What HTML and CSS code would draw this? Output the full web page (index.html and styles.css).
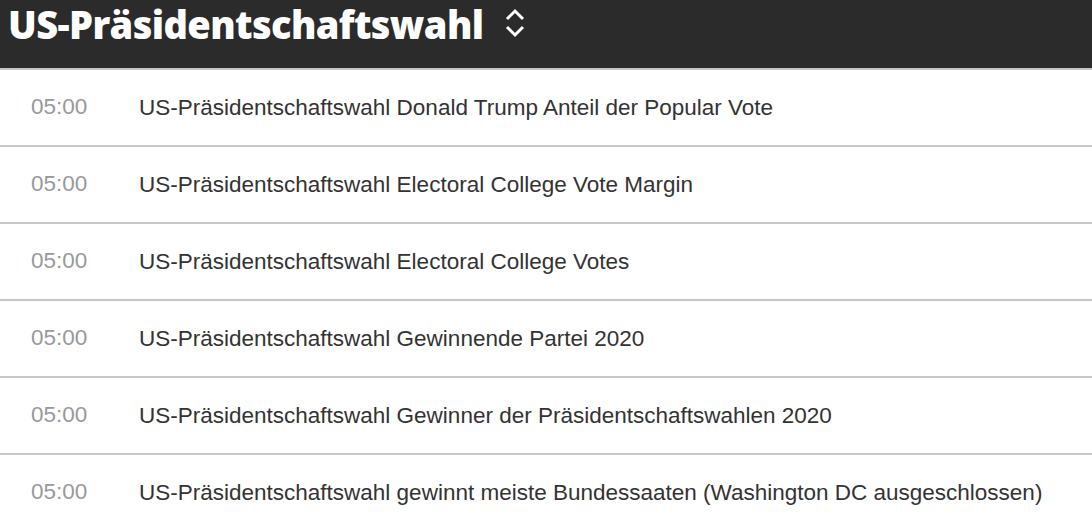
FILE: index.html
```html
<!DOCTYPE html>
<html lang="de">
<head>
<meta charset="utf-8">
<link rel="stylesheet" href="styles.css">
</head>
<body>
<header class="header">
  <h1 class="title">US-Präsidentschaftswahl</h1>
  <svg class="chev" width="20" height="30" viewBox="0 0 20 30" aria-hidden="true">
    <path d="M2 11 L10 3 L18 11" fill="none" stroke="#fff" stroke-width="3"/>
    <path d="M2 19 L10 27 L18 19" fill="none" stroke="#fff" stroke-width="3"/>
  </svg>
</header>
<ul class="list">
  <li class="row"><span class="time">05:00</span><span class="name">US-Präsidentschaftswahl Donald Trump Anteil der Popular Vote</span></li>
  <li class="row"><span class="time">05:00</span><span class="name">US-Präsidentschaftswahl Electoral College Vote Margin</span></li>
  <li class="row"><span class="time">05:00</span><span class="name">US-Präsidentschaftswahl Electoral College Votes</span></li>
  <li class="row"><span class="time">05:00</span><span class="name">US-Präsidentschaftswahl Gewinnende Partei 2020</span></li>
  <li class="row"><span class="time">05:00</span><span class="name">US-Präsidentschaftswahl Gewinner der Präsidentschaftswahlen 2020</span></li>
  <li class="row"><span class="time">05:00</span><span class="name">US-Präsidentschaftswahl gewinnt meiste Bundessaaten (Washington DC ausgeschlossen)</span></li>
</ul>
</body>
</html>
```
FILE: styles.css
```css
html, body { margin: 0; padding: 0; background: #fff; }
body { font-family: "Liberation Sans", Arial, sans-serif; overflow: hidden; }
.header {
  background: #2b2b2b;
  height: 68px;
  border-bottom: 2px solid #c8c8c8;
  display: flex;
  align-items: flex-start;
  padding: 0 0 0 8px;
  gap: 22px;
}
.title {
  margin: 0;
  color: #fff;
  font-family: "Open Sans", sans-serif;
  font-weight: 800;
  font-size: 38px;
  line-height: 48px;
  letter-spacing: -0.6px;
}
.chev { margin-top: 8px; }
.list { list-style: none; margin: 0; padding: 0; }
.row {
  display: flex;
  align-items: center;
  height: 75px;
  border-bottom: 2px solid #c8c8c8;
  font-size: 22.5px;
}
.time { color: #999; width: 108px; padding-left: 31px; margin-top: -2px; }
.name { color: #333; }
```
